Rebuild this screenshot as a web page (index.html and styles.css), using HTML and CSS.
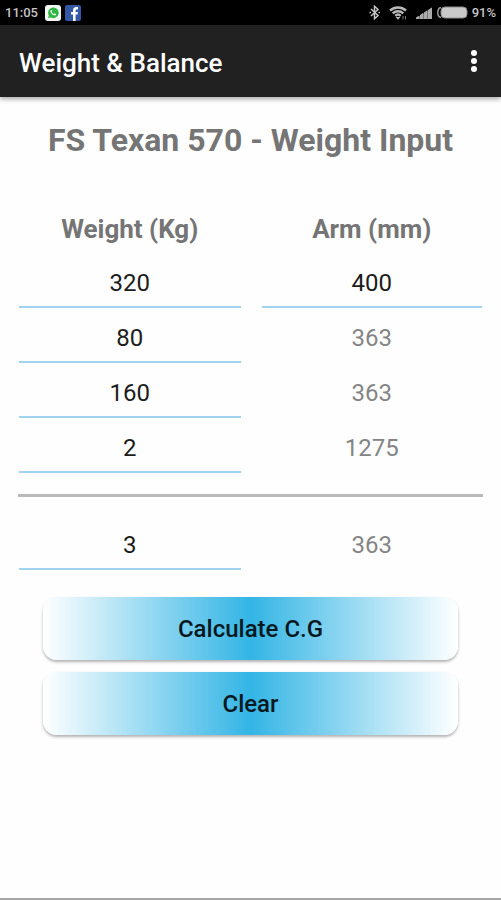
FILE: index.html
```html
<!DOCTYPE html>
<html lang="en">
<head>
<meta charset="utf-8">
<meta name="viewport" content="width=device-width, initial-scale=1">
<title>Weight &amp; Balance</title>
<link rel="stylesheet" href="styles.css">
</head>
<body>
<div class="status">
  <span class="status-text">11:05</span>
  <span class="apps">
    <svg width="16" height="16" viewBox="0 0 16 16" aria-hidden="true">
      <rect width="16" height="16" rx="3" fill="#f4f8f4"/>
      <path d="M3 13.2l.8-2.8A5.3 5.3 0 1 1 5.800 12.400z" fill="#2fb944"/>
      <path d="M5.800 5.200c.6-.6 1.200.3 1.400 1 .1.500-.5.700-.3 1.100.5.900 1 1.400 1.900 1.700.4.100.6-.7 1.100-.5.900.3 1.500.8 1 1.400-1.700 1.800-6.600-2.200-5.100-4.700z" fill="#fff"/>
    </svg>
    <svg width="16" height="16" viewBox="0 0 16 16" aria-hidden="true">
      <rect width="16" height="16" rx="2" fill="#3458a5"/>
      <path d="M8 16V9.500H6V7h2V5.500C8 3.200 9.200 2 11.300 2H13v2.500h-1.300c-.8 0-1.100.4-1.100 1.100V7H13l-.4 2.500h-2V16z" fill="#fff"/>
    </svg>
  </span>
  <span class="spacer"></span>
  <svg width="12" height="15" viewBox="0 0 12 15" fill="none" stroke="#c4c4c4" stroke-width="1.500" aria-hidden="true">
    <path d="M2 4l7 6.500-3.500 3.200V1.300L9 4.500 2 11"/>
    <path d="M.5 7.500h1.500M9.500 7.500H11"/>
  </svg>
  <svg class="wifi" width="18" height="14" viewBox="0 0 18 14" aria-hidden="true">
    <path d="M1 4.500a12 12 0 0 1 16 0M3.700 7.300a8 8 0 0 1 10.600 0M6.300 9.800a4 4 0 0 1 5.400 0" fill="none" stroke="#b8b8b8" stroke-width="2.400"/>
    <path d="M6.500 11h5L9 13.800z" fill="#b8b8b8"/>
    <path d="M14 10v3.500M16.500 10v3.500" stroke="#777"/>
  </svg>
  <svg width="18" height="12" viewBox="0 0 18 12" fill="#aaa" aria-hidden="true">
    <path d="M1 11.500L17 .5V12H1z" fill="#777"/>
    <path d="M1 10.500l3-1.700V12H1zM5 8l3-2V12H5zM9 5.500l3-2V12H9zM13 3L17 .4V12h-4z"/>
  </svg>
  <svg class="battery" width="31" height="13" viewBox="0 0 31 13" aria-hidden="true">
    <path d="M4 1.500Q.8 2 .8 6.500T4 11.500" fill="none" stroke="#999" stroke-width="1.500"/>
    <rect x="4" y="1" width="26" height="11" rx="4" fill="#c9c9c9" stroke="#8c8c8c"/>
  </svg>
  <span class="status-text">91%</span>
</div>

<header class="appbar">
  <h1>Weight &amp; Balance</h1>
  <button class="menu" type="button" aria-label="More options">
    <svg width="8" height="24" viewBox="0 0 8 24" fill="#fff" aria-hidden="true">
      <circle cx="4" cy="4" r="3"/><circle cx="4" cy="12" r="3"/><circle cx="4" cy="20" r="3"/>
    </svg>
  </button>
</header>

<main>
  <h2>FS Texan 570 - Weight Input</h2>
  <form>
    <table>
      <thead>
        <tr><th scope="col">Weight (Kg)</th><th scope="col">Arm (mm)</th></tr>
      </thead>
      <tbody>
        <tr><td><input type="text" inputmode="numeric" aria-label="Weight 1 in kg" value="320"></td><td><input type="text" inputmode="numeric" aria-label="Arm 1 in mm" value="400"></td></tr>
        <tr><td><input type="text" inputmode="numeric" aria-label="Weight 2 in kg" value="80"></td><td><span class="arm">363</span></td></tr>
        <tr><td><input type="text" inputmode="numeric" aria-label="Weight 3 in kg" value="160"></td><td><span class="arm">363</span></td></tr>
        <tr><td><input type="text" inputmode="numeric" aria-label="Weight 4 in kg" value="2"></td><td><span class="arm">1275</span></td></tr>
      </tbody>
    </table>
    <hr>
    <table>
      <tbody>
        <tr><td><input type="text" inputmode="numeric" aria-label="Weight 5 in kg" value="3"></td><td><span class="arm">363</span></td></tr>
      </tbody>
    </table>
    <div class="actions">
      <button class="action" type="button">Calculate C.G</button>
      <button class="action" type="reset">Clear</button>
    </div>
  </form>
</main>
</body>
</html>
```
FILE: styles.css
```css
* {
  box-sizing: border-box;
}

body {
  margin: 0;
  min-height: 100vh;
  display: flex;
  flex-direction: column;
  background: #fefefe;
  border-bottom: 2px solid #a6a6a6;
  font-family: Roboto, "Liberation Sans", sans-serif;
}

.status {
  height: 25px;
  padding: 0 5px;
  display: flex;
  align-items: center;
  gap: 4px;
  background: #000;
}

.status-text {
  color: #c4c4c4;
  font-size: 13px;
  font-weight: 500;
}

.apps {
  display: flex;
  gap: 4px;
  padding-left: 3px;
}

.spacer {
  flex: 1;
}

.wifi {
  margin: 0 4px;
}

.appbar {
  height: 72px;
  padding: 0 19px;
  display: flex;
  align-items: center;
  justify-content: space-between;
  background: #212121;
  box-shadow: 0 2px 5px rgba(0, 0, 0, 0.35);
}

h1 {
  margin: 0;
  padding-top: 4px;
  color: #fff;
  font-size: 26px;
  font-weight: 500;
}

.menu {
  display: flex;
  padding: 0 4px;
  border: 0;
  background: none;
}

main {
  flex: 1;
  padding: 0 19px;
}

h2 {
  margin: 20px 0 42px;
  color: #757575;
  font-size: 32px;
  font-weight: 700;
  line-height: 46px;
  text-align: center;
  white-space: nowrap;
}

table {
  width: 100%;
  table-layout: fixed;
  border-collapse: collapse;
}

th {
  height: 48px;
  padding: 0;
  color: #757575;
  font-size: 26px;
  font-weight: 700;
}

th:first-child,
td:first-child {
  padding: 0 10px 0 0;
}

th:last-child,
td:last-child {
  padding: 0 0 0 11px;
}

input,
.arm {
  display: block;
  width: 100%;
  height: 55px;
  padding: 6px 0 0;
  border: 0;
  border-bottom: 2px solid #9fd3ef;
  border-radius: 0;
  background: none;
  color: #1c1c1c;
  font-family: inherit;
  font-size: 24px;
  line-height: 48px;
  text-align: center;
  outline: 0;
}

.arm {
  border-color: transparent;
  color: #858585;
}

hr {
  height: 3px;
  margin: 21px -1px 18px;
  border: 0;
  background: #bababa;
}

.actions {
  display: flex;
  flex-direction: column;
  gap: 12px;
  padding: 27px 24px;
}

.action {
  height: 63px;
  border: 0;
  border-radius: 14px;
  background: linear-gradient(90deg, #fff, #33b5e5 50%, #fff);
  box-shadow: 0 2px 3px rgba(0, 0, 0, 0.3);
  color: #07181f;
  font-family: inherit;
  font-size: 24px;
  font-weight: 500;
}
```
